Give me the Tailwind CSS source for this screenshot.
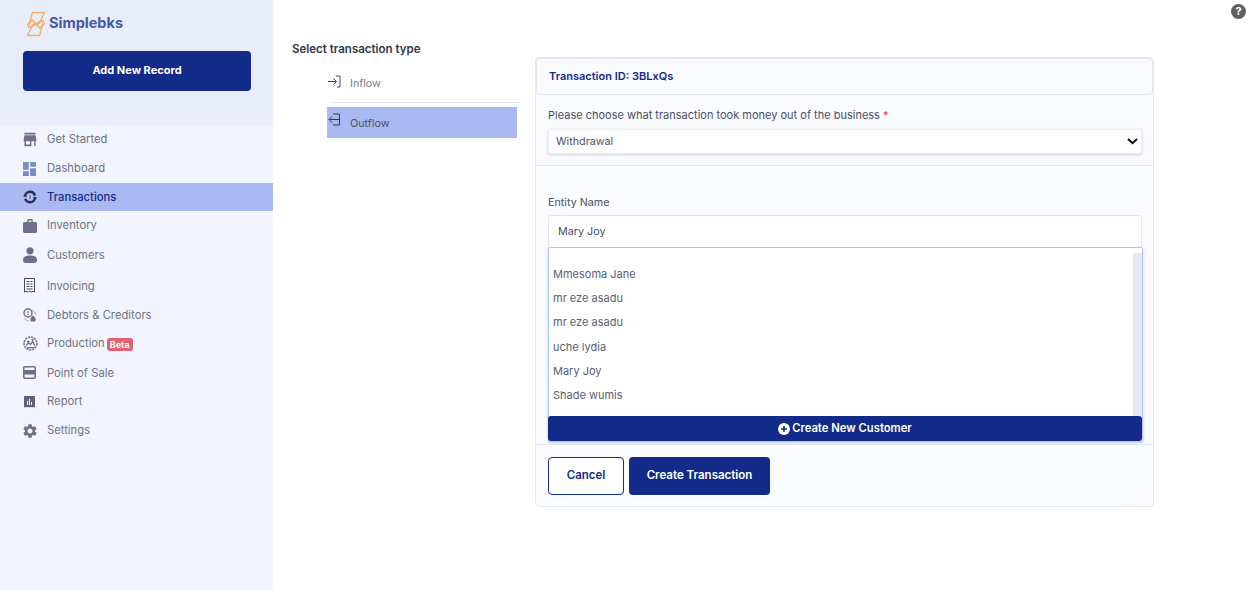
<!DOCTYPE html>
<html lang="en">
  <head>
    <meta charset="UTF-8" />
    <meta name="viewport" content="width=device-width, initial-scale=1.0" />
    <title>Simplebks</title>
    <script src="https://cdn.jsdelivr.net/npm/@tailwindcss/browser@4"></script>
  </head>
  <body class="bg-white font-['Inter',sans-serif] text-[11px] text-[#4b4f63]">
    <div class="relative flex h-[590px] w-[1256px] overflow-hidden">
      <!-- Sidebar -->
      <aside class="flex w-[273px] shrink-0 flex-col bg-[#f2f5fe]">
        <div class="h-[125px] bg-[#e8ecfb] px-[23px] pt-[11px]">
          <div class="flex h-[26px] items-center gap-[3px] pl-[3px]">
            <svg class="h-[26px] w-[20px]" viewBox="0 0 20 26" fill="none" stroke="#f6ae66" stroke-width="1.3" stroke-linejoin="round">
              <path d="M6.5 1.5H18.5L13.5 12H9L6 16H2.5Z" />
              <path d="M13.5 24.5H1.5L6.5 14H11L14 10H17.5Z" />
              <path d="M1 14L6 8.5L9 12" />
              <path d="M19 12L14 17.5L11 14" />
            </svg>
            <span class="mb-[2px] text-[14.5px] leading-none font-bold text-[#4358a8]">Simplebks</span>
          </div>
          <button class="mt-[14px] h-[40px] w-[228px] rounded-[4px] bg-[#132b88] pb-[2px] text-[11px] font-bold text-white">Add New Record</button>
        </div>
        <nav class="flex flex-col text-[11.25px] text-[#6e7284]">
          <a class="flex h-[29px] items-center pl-[23px]">
            <svg class="h-[15px] w-[14px] shrink-0" viewBox="2 3 20 18" preserveAspectRatio="none" fill="#6c7088"><path d="M20 4H4v2h16V4zm1 10v-2l-1-5H4l-1 5v2h1v6h10v-6h4v6h2v-6h1zm-9 4H6v-4h6v4z" /></svg>
            <span class="ml-[10px]">Get Started</span>
          </a>
          <a class="flex h-[29px] items-center pl-[23px]">
            <svg class="h-[14px] w-[13px] shrink-0" viewBox="3 3 18 18" preserveAspectRatio="none" fill="#7a8cc8"><path d="M3 13h8V3H3v10zm0 8h8v-6H3v6zm10 0h8V11h-8v10zm0-18v6h8V3h-8z" /></svg>
            <span class="ml-[11px]">Dashboard</span>
          </a>
          <a class="flex h-[28px] items-center bg-[#aab9f1] pl-[23px] text-[#132b88]">
            <svg class="h-[14px] w-[14px] shrink-0" viewBox="0 0 14 14" fill="none">
              <circle cx="7" cy="7" r="5.2" stroke="#2a2f55" stroke-width="2.4" stroke-dasharray="14 2.4" />
              <path d="M0 6L3 4L3.8 7Z M14 8L11 10L10.2 7Z" fill="#2a2f55" />
              <circle cx="7" cy="7" r="2.6" fill="#c9d3f6" />
              <path d="M7 5V9" stroke="#2a2f55" stroke-width="1" />
            </svg>
            <span class="ml-[10px] font-medium">Transactions</span>
          </a>
          <a class="flex h-[29px] items-center pl-[23px]">
            <svg class="h-[14px] w-[14px] shrink-0" viewBox="2 2 20 19" preserveAspectRatio="none" fill="#6c7088"><path d="M20 6h-4V4c0-1.1-.9-2-2-2h-4c-1.1 0-2 .9-2 2v2H4c-1.1 0-2 .9-2 2v11c0 1.1.9 2 2 2h16c1.1 0 2-.9 2-2V8c0-1.1-.9-2-2-2zm-6 0h-4V4h4v2z" /></svg>
            <span class="ml-[10px]">Inventory</span>
          </a>
          <a class="flex h-[30px] items-center pl-[23px]">
            <svg class="h-[16px] w-[14px] shrink-0" viewBox="0 0 14 16" fill="#6c7088"><circle cx="7" cy="3.8" r="3.6" /><path d="M0 13C0 9.5 3 8.5 7 8.5S14 9.5 14 13C14 15 13 16 11.5 16H2.5C1 16 0 15 0 13Z" /></svg>
            <span class="ml-[10px]">Customers</span>
          </a>
          <a class="flex h-[31px] items-center pl-[23px]">
            <svg class="h-[15px] w-[13px] shrink-0" viewBox="0 0 13 15" fill="none" stroke="#44485e">
              <path d="M1.5 .5H11.5V14L10 13.2L8.3 14L6.5 13.2L4.7 14L3 13.2L1.5 14Z" />
              <path d="M3.5 3.5H6.5M7.5 3.5H9.5M3.5 6H6.5M7.5 6H9.5M3.5 8.5H6.5M7.5 8.5H9.5M3.5 11H9.5" />
            </svg>
            <span class="mt-[2px] ml-[11px]">Invoicing</span>
          </a>
          <a class="flex h-[28px] items-center pl-[23px]">
            <svg class="h-[14px] w-[14px] shrink-0" viewBox="0 0 14 14" fill="none">
              <circle cx="5" cy="5" r="4" stroke="#6c7088" stroke-width="1.5" />
              <path d="M5 3V7" stroke="#6c7088" />
              <path d="M9 2.5C11 3 12.5 4.5 13 6.5" stroke="#9a9eb0" />
              <path d="M7.5 10L10 7.5L12.5 10V13.5H7.5Z" fill="#6c7088" />
              <path d="M1.5 10C2 11.5 3.5 12.5 5.5 13" stroke="#9a9eb0" />
            </svg>
            <span class="ml-[10px]">Debtors &amp; Creditors</span>
          </a>
          <a class="flex h-[29px] items-center pl-[23px]">
            <svg class="h-[15px] w-[15px] shrink-0" viewBox="0 0 14 14" fill="none" stroke="#6c7088">
              <circle cx="7" cy="7" r="6" stroke-width="1.4" stroke-dasharray="2 .8" />
              <path d="M3 9L5 6L7 8L9 5L11 9" stroke-width="1.2" />
              <path d="M3.5 11H10.5M4 5H6M8 3.5H10" stroke="#44485e" />
            </svg>
            <span class="mb-[1px] ml-[9px]">Production</span>
            <span class="mb-[-1px] ml-[2px] rounded-[3px] bg-[#e4606f] px-[3px] text-[9px] leading-[13px] font-bold text-white">Beta</span>
          </a>
          <a class="flex h-[29px] items-center pl-[23px]">
            <svg class="h-[13px] w-[13px] shrink-0" viewBox="0 0 13 13" fill="none"><rect x=".75" y=".75" width="11.5" height="11.5" rx="1" stroke="#6c7088" stroke-width="1.5" /><rect x="1" y="4" width="11" height="4.5" fill="#6c7088" /></svg>
            <span class="mt-[1px] ml-[11px]">Point of Sale</span>
          </a>
          <a class="flex h-[29px] items-center pl-[23px]">
            <svg class="ml-[1px] h-[12px] w-[11px] shrink-0" viewBox="0 0 11 12"><rect width="11" height="11" fill="#5f6379" /><rect y="11" width="11" height="1" fill="#d4d6e0" /><path d="M3 5H4V9H3ZM5 3H6V9H5ZM7 6H8V9H7Z" fill="#f2f5fe" /></svg>
            <span class="ml-[12px]">Report</span>
          </a>
          <a class="flex h-[29px] items-center pl-[23px]">
            <svg class="h-[14px] w-[14px] shrink-0" viewBox="2 2 20 20" fill="#6c7088"><path d="M19.14 12.94c.04-.3.06-.61.06-.94 0-.32-.02-.64-.07-.94l2.03-1.58c.18-.14.23-.41.12-.61l-1.92-3.32c-.12-.22-.37-.29-.59-.22l-2.39.96c-.5-.38-1.03-.7-1.62-.94l-.36-2.54c-.04-.24-.24-.41-.48-.41h-3.84c-.24 0-.43.17-.47.41l-.36 2.54c-.59.24-1.13.57-1.62.94l-2.39-.96c-.22-.08-.47 0-.59.22L2.74 8.87c-.12.21-.08.47.12.61l2.03 1.58c-.05.3-.09.63-.09.94s.02.64.07.94l-2.03 1.58c-.18.14-.23.41-.12.61l1.92 3.32c.12.22.37.29.59.22l2.39-.96c.5.38 1.03.7 1.62.94l.36 2.54c.05.24.24.41.48.41h3.84c.24 0 .44-.17.47-.41l.36-2.54c.59-.24 1.13-.56 1.62-.94l2.39.96c.22.08.47 0 .59-.22l1.92-3.32c.12-.22.07-.47-.12-.61l-2.01-1.58zM12 15.6c-1.98 0-3.6-1.62-3.6-3.6s1.62-3.6 3.6-3.6 3.6 1.62 3.6 3.6-1.62 3.6-3.6 3.6z" /></svg>
            <span class="ml-[10px]">Settings</span>
          </a>
        </nav>
      </aside>

      <!-- Main -->
      <main class="flex-1 pt-[42px] pl-[19px]">
        <h2 class="text-[11.5px] leading-[14px] font-semibold text-[#33374d]">Select transaction type</h2>
        <div class="mt-px flex">
          <!-- Transaction type tabs -->
          <div class="mt-[10px] ml-[35px] w-[194px]">
            <div class="flex h-[35px] w-[190px] items-center pl-[1px]">
              <svg class="mb-[6px] h-[14px] w-[13px]" viewBox="0 0 13 14" fill="none" stroke="#44485e"><path d="M0 6.5H8M5.5 3.5L8.5 6.5L5.5 9.5M8 1H12V12H9" /></svg>
              <span class="mb-[1px] ml-[9px] text-[10.75px] text-[#7a7e8e]">Inflow</span>
            </div>
            <div class="ml-[4px] h-px bg-[#e3e7f0]"></div>
            <div class="mt-[4px] flex h-[31px] w-[190px] items-center bg-[#aab9f1] pl-[1px]">
              <svg class="mb-[6px] h-[14px] w-[13px]" viewBox="0 0 13 14" fill="none" stroke="#33374d"><path d="M12 6.5H1.5M4 3.5L1 6.5L4 9.5M5 1H11.5V12H5" /></svg>
              <span class="mt-[3px] ml-[9px] text-[10.75px] text-[#4b4f63]">Outflow</span>
            </div>
          </div>

          <!-- Form card -->
          <div class="ml-[14px] h-[450px] w-[619px] rounded-[4px] border border-[#e3e7f0] bg-[#fafbfe]">
            <div class="flex h-[37px] items-center rounded-[4px] border border-[#e3e7f0] pl-[12px] text-[11px] font-semibold text-[#132b88]">Transaction ID: 3BLxQs</div>
            <div class="border-b border-[#e3e7f0] px-[12px] pt-[13px] pb-[11px]">
              <label class="block leading-[14px]">Please choose what transaction took money out of the business <span class="text-red-500">*</span></label>
              <div class="relative mt-[7px] h-[25px] w-[594px]">
                <select class="block h-[25px] w-full appearance-none rounded-[3px] border border-[#eceff6] bg-white pt-[1px] pl-[7px] text-[10.75px] shadow-[0_1px_3px_rgba(60,70,110,0.22)]">
                  <option>Withdrawal</option>
                </select>
                <svg class="absolute top-[9px] right-[4px] h-[7px] w-[11px]" viewBox="0 0 11 7" fill="none" stroke="#111" stroke-width="2"><path d="M1 1L5.5 5.2L10 1" /></svg>
              </div>
            </div>
            <div class="px-[12px] pt-[30px]">
              <label class="block text-[10.75px] leading-[14px]">Entity Name</label>
              <input class="mt-[5px] block h-[33px] w-[594px] rounded-t-[3px] border border-[#e3e7f0] bg-white pl-[9px] text-[10.75px] text-[#4b4f63]" value="Mary Joy" />
              <div class="-mt-[1px] flex h-[195px] w-[595px] flex-col rounded-[2px] border border-[#b4c2f5] bg-white shadow-[0_1px_3px_rgba(120,140,230,0.4)]">
                <div class="flex flex-1">
                  <ul class="flex-1 pt-[14px] pl-[4px] text-[11px] text-[#5a5d72]">
                    <li class="h-[24px] leading-[24px]">Mmesoma Jane</li>
                    <li class="h-[24px] leading-[24px]">mr eze asadu</li>
                    <li class="h-[25px] leading-[24px]">mr eze asadu</li>
                    <li class="h-[24px] leading-[24px]">uche lydia</li>
                    <li class="h-[24px] leading-[24px]">Mary Joy</li>
                    <li class="h-[24px] leading-[24px]">Shade wumis</li>
                  </ul>
                  <div class="mt-[5px] w-[9px] bg-[#e5e9f4]"></div>
                </div>
                <button class="-ml-px flex h-[25px] items-center justify-center gap-[2px] rounded-[3px] bg-[#132b88] text-[11.25px] font-semibold text-white">
                  <svg class="h-[12px] w-[12px]" viewBox="0 0 12 12"><circle cx="6" cy="6" r="6" fill="#fff" /><path d="M6 3V9M3 6H9" stroke="#132b88" stroke-width="1.6" /></svg>
                  Create New Customer
                </button>
              </div>
            </div>
            <div class="mt-[2px] flex gap-[5px] border-t border-[#e3e7f0] px-[12px] pt-[12px]">
              <button class="h-[38px] w-[76px] rounded-[4px] border border-[#132b88] bg-white text-[11.5px] font-semibold text-[#132b88]">Cancel</button>
              <button class="h-[38px] w-[141px] rounded-[4px] bg-[#132b88] text-[11.5px] font-semibold text-white">Create Transaction</button>
            </div>
          </div>
        </div>
      </main>

      <!-- Help -->
      <div class="absolute top-[4px] right-[10px] flex h-[15px] w-[15px] items-center justify-center rounded-full bg-[#5f5f5f] text-[11px] leading-none font-bold text-white">?</div>
    </div>
  </body>
</html>
